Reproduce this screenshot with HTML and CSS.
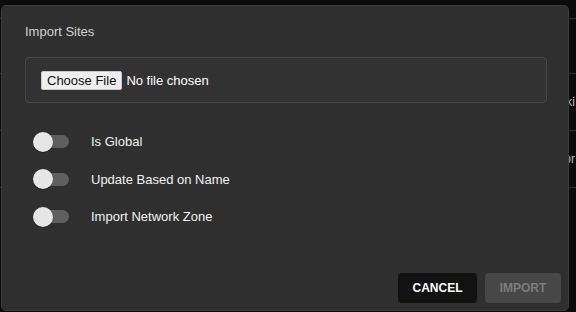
FILE: index.html
```html
<!DOCTYPE html>
<html lang="en">
<head>
  <meta charset="UTF-8">
  <title>Import Sites</title>
  <link rel="stylesheet" href="styles.css">
</head>
<body>
  <div class="backdrop">
    <div class="bg-row bg-head"></div>
    <div class="bg-row bg-tall"></div>
    <div class="bg-row"><span class="bg-cell">Helsinki</span></div>
    <div class="bg-row"><span class="bg-cell">Ecuador</span></div>
  </div>

  <div class="dialog">
    <h2 class="dialog-title">Import Sites</h2>

    <div class="file-box">
      <input class="file-input" type="file" />
    </div>

    <div class="options">
      <label class="option">
        <span class="switch"><span class="track"></span><span class="thumb"></span></span>
        <span class="option-label">Is Global</span>
      </label>
      <label class="option">
        <span class="switch"><span class="track"></span><span class="thumb"></span></span>
        <span class="option-label">Update Based on Name</span>
      </label>
      <label class="option">
        <span class="switch"><span class="track"></span><span class="thumb"></span></span>
        <span class="option-label">Import Network Zone</span>
      </label>
    </div>

    <div class="actions">
      <button class="btn btn-cancel">CANCEL</button>
      <button class="btn btn-import" disabled>IMPORT</button>
    </div>
  </div>
</body>
</html>
```

FILE: styles.css
```css
* {
  margin: 0;
  padding: 0;
  box-sizing: border-box;
  font-family: 'Liberation Sans', Arial, sans-serif;
}

html, body {
  width: 100%;
  height: 100%;
  background: #0b0b0b;
  color: white;
  overflow: hidden;
}

.backdrop {
  display: flex;
  flex-direction: column;
}

.bg-row {
  height: 57px;
  border-bottom: 1px solid #2e2e2e;
  display: flex;
  align-items: center;
  justify-content: flex-end;
}

.bg-head {
  height: 19px;
}

.bg-tall {
  height: 55px;
}

.bg-cell {
  font-size: 12px;
  color: #b5b5b5;
  margin-right: 1px;
}

.dialog {
  position: absolute;
  left: 1px;
  top: 5px;
  width: 568px;
  height: 306px;
  background: #2f2f2f;
  border: 1px solid #3b3b3b;
  border-radius: 5px;
  padding: 17px 7px 7px 23px;
  display: flex;
  flex-direction: column;
}

.dialog-title {
  font-size: 13px;
  font-weight: normal;
  line-height: 17px;
  color: #d2d2d2;
  margin-bottom: 17px;
}

.file-box {
  width: 522px;
  height: 46px;
  border: 1px solid #474747;
  border-radius: 4px;
  background: #323232;
  padding: 0 15px;
  display: flex;
  align-items: center;
}

.file-input {
  font-size: 13px;
  color: white;
}

.file-input::file-selector-button {
  font-size: 13px;
  color: #111;
  background: #efefef;
  border: 1px solid #c9c9c9;
  border-radius: 2px;
  padding: 1px 5px;
  margin-right: 4px;
  height: 19px;
}

.options {
  margin-top: 20px;
  display: flex;
  flex-direction: column;
}

.option {
  height: 37.5px;
  display: flex;
  align-items: center;
  gap: 22px;
}

.switch {
  position: relative;
  width: 36px;
  height: 20px;
  margin-left: 8px;
  display: flex;
  align-items: center;
}

.track {
  margin-left: 1px;
  width: 35px;
  height: 13px;
  border-radius: 7px;
  background: #5f5f5f;
}

.thumb {
  position: absolute;
  left: 0;
  top: 0;
  width: 20px;
  height: 20px;
  border-radius: 50%;
  background: #e6e6e6;
  box-shadow: 0 1px 1px rgba(0, 0, 0, 0.3);
}

.option-label {
  font-size: 13px;
  color: #f2f2f2;
}

.actions {
  margin-top: auto;
  display: flex;
  justify-content: flex-end;
  gap: 8px;
}

.btn {
  height: 30px;
  border: none;
  border-radius: 4px;
  font-size: 12px;
  font-weight: bold;
}

.btn-cancel {
  width: 79px;
  background: #121212;
  color: white;
}

.btn-import {
  width: 76px;
  background: #474747;
  color: #7c7c7c;
}
```
